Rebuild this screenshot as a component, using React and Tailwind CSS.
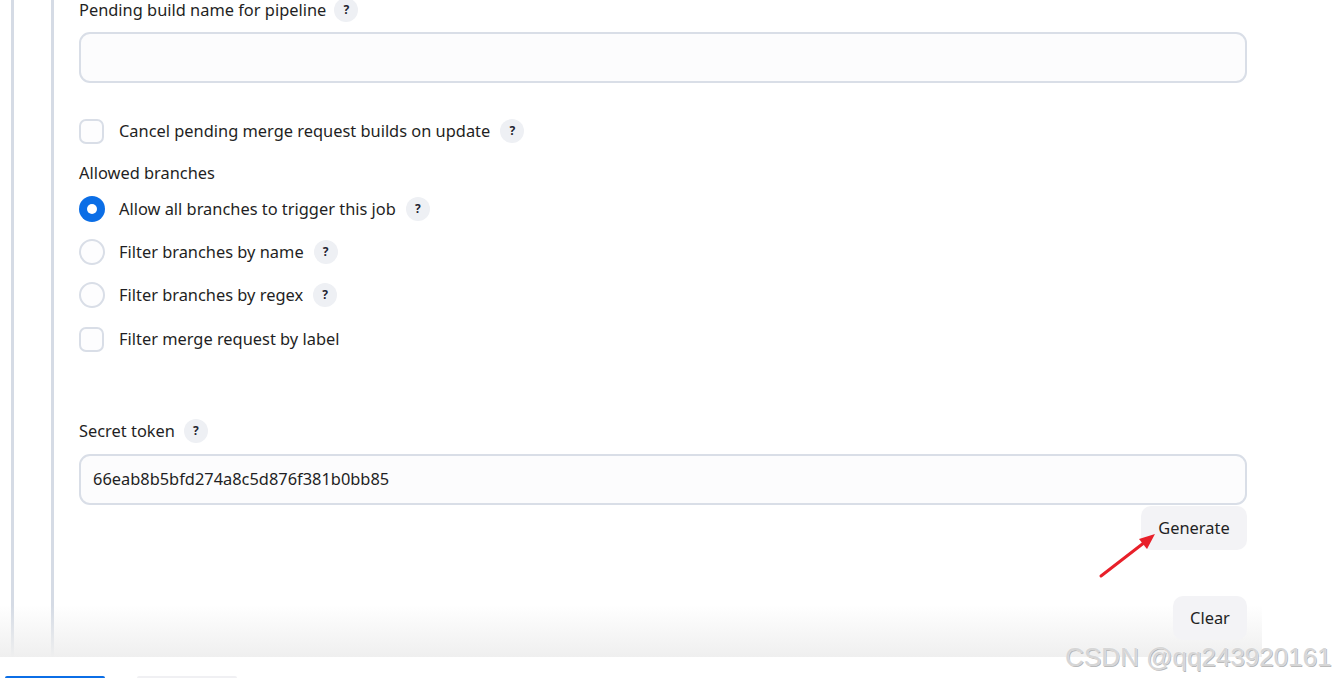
import React from "react";

const FONT = { fontFamily: '"Noto Sans", "Open Sans", sans-serif' };

function Help() {
  return (
    <span className="inline-flex h-[24px] w-[24px] shrink-0 items-center justify-center rounded-full bg-[#eef0f4] text-[12px] font-bold text-[#1f2430]">
      ?
    </span>
  );
}

function Label({ children, help = true }) {
  return (
    <div className="flex h-[24px] items-center gap-[9px] text-[16.4px] leading-[24px] text-[#1f1f24]">
      <span>{children}</span>
      {help && <Help />}
    </div>
  );
}

function Checkbox({ label, help }) {
  return (
    <div className="flex h-[24px] items-center">
      <span className="h-[25px] w-[25px] shrink-0 rounded-[7px] border-2 border-[#d9dee7] bg-[#fdfdfe]" />
      <span className="ml-[15px] mr-[10px] text-[16.4px] text-[#1f1f24]">{label}</span>
      {help && <Help />}
    </div>
  );
}

function Radio({ label, checked, help = true }) {
  return (
    <div className="flex h-[26px] items-center">
      {checked ? (
        <span className="flex h-[26px] w-[26px] shrink-0 items-center justify-center rounded-full bg-[#0b6ee6]">
          <span className="h-[10px] w-[10px] rounded-full bg-white" />
        </span>
      ) : (
        <span className="h-[26px] w-[26px] shrink-0 rounded-full border-2 border-[#d9dee7] bg-[#fdfdfe]" />
      )}
      <span className="ml-[14px] mr-[10px] text-[16.4px] text-[#1f1f24]">{label}</span>
      {help && <Help />}
    </div>
  );
}

function TextInput({ value }) {
  return (
    <div className="flex h-[51px] w-[1168px] items-center rounded-[11px] border-2 border-[#d9dee7] bg-[#fcfcfd] px-[12px] text-[16.4px] text-[#1f1f24]">
      {value}
    </div>
  );
}

export default function App() {
  return (
    <div className="relative h-[678px] w-[1334px] overflow-hidden bg-white" style={FONT}>
      <div className="flex h-[657px]">
        <div className="ml-[11px] flex border-l-[3px] border-[#d5dbe5]">
          <div className="ml-[37px] border-l-[3px] border-[#d5dbe5] pl-[25px]">
            <div className="flex flex-col">
              <div className="flex h-[20px] items-center gap-[8px] text-[16.4px] leading-[20px] text-[#1f1f24]">
                <span>Pending build name for pipeline</span>
                <Help />
              </div>
              <div className="mt-[12px]">
                <TextInput value="" />
              </div>
              <div className="mt-[36px]">
                <Checkbox label="Cancel pending merge request builds on update" help />
              </div>
              <div className="mt-[18px]">
                <Label help={false}>Allowed branches</Label>
              </div>
              <div className="mt-[11px] flex flex-col gap-[17px]">
                <Radio label="Allow all branches to trigger this job" checked />
                <Radio label="Filter branches by name" />
                <Radio label="Filter branches by regex" />
                <div className="mt-[2px]">
                  <Checkbox label="Filter merge request by label" />
                </div>
              </div>
              <div className="mt-[68px]">
                <Label>Secret token</Label>
              </div>
              <div className="mt-[11px]">
                <TextInput value="66eab8b5bfd274a8c5d876f381b0bb85" />
              </div>
              <div className="mt-[1px] flex justify-end">
                <button className="h-[44px] w-[106px] rounded-[10px] bg-[#f3f3f6] text-[16.4px] text-[#1f1f24]">
                  Generate
                </button>
              </div>
              <div className="mt-[46px] flex justify-end">
                <button className="relative z-10 h-[44px] w-[74px] rounded-[10px] bg-[#f3f3f6] text-[16.4px] text-[#1f1f24]">
                  Clear
                </button>
              </div>
            </div>
          </div>
        </div>
      </div>

      {/* sticky footer fade */}
      <div className="pointer-events-none absolute left-0 top-[605px] h-[52px] w-[1262px] bg-gradient-to-b from-white/0 to-[#efefef]" />

      {/* footer buttons peeking in */}
      <div className="flex h-[21px] items-end gap-[32px] pl-[5px]">
        <div className="h-[2px] w-[100px] rounded-t-[6px] bg-[#0b6ee6]" />
        <div className="h-[2px] w-[100px] rounded-t-[6px] bg-[#f0f0f3]" />
      </div>

      {/* red annotation arrow */}
      <svg className="pointer-events-none absolute left-[1095px] top-[528px]" width="66" height="54" viewBox="0 0 66 54">
        <line x1="6" y1="48" x2="50" y2="14" stroke="#e8202a" strokeWidth="3" strokeLinecap="round" />
        <polygon points="60,6 44,11 52,21" fill="#e8202a" />
      </svg>

      {/* watermark */}
      <div
        className="pointer-events-none absolute left-[1065px] top-[640px] text-[26px] leading-[34px] text-[#d6d6d6]"
        style={{ fontFamily: '"Liberation Sans", Arial, sans-serif', textShadow: "0 0 1px #fff, 1px 1px 0 #b4b4b4" }}
      >
        CSDN @qq243920161
      </div>
    </div>
  );
}
